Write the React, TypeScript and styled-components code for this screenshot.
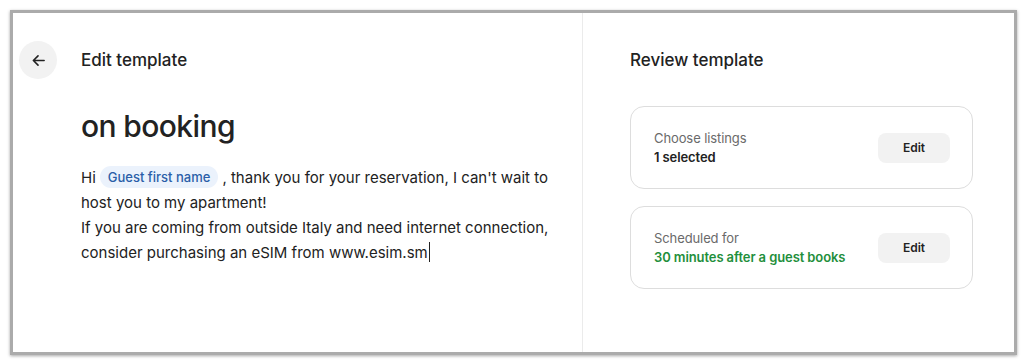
import React from "react";
import styled, { createGlobalStyle } from "styled-components";

const GlobalStyle = createGlobalStyle`
  html, body {
    margin: 0;
    padding: 0;
    background: #ffffff;
  }
  body {
    font-family: Inter, "Noto Sans", "Liberation Sans", sans-serif;
    color: #222222;
    -webkit-font-smoothing: antialiased;
  }
`;

const Page = styled.div`
  padding: 10px 7px 10px 10px;
`;

const Panel = styled.div`
  box-sizing: border-box;
  width: 1007px;
  height: 345px;
  border: 3px solid #ababab;
  box-shadow: 0 1px 3px rgba(0, 0, 0, 0.35);
  background: #ffffff;
  display: flex;
`;

const EditorColumn = styled.section`
  width: 570px;
  border-right: 1px solid #ebebeb;
  padding: 28px 0 0 6px;
  box-sizing: border-box;
`;

const ReviewColumn = styled.section`
  flex: 1;
  padding: 28px 41px 0 47px;
  box-sizing: border-box;
`;

const HeaderRow = styled.div`
  display: flex;
  align-items: center;
  gap: 24px;
  height: 38px;
`;

const BackButton = styled.button`
  width: 38px;
  height: 38px;
  border-radius: 50%;
  border: none;
  background: #f2f2f2;
  display: flex;
  align-items: center;
  justify-content: center;
  padding: 0;
  color: #222222;
  cursor: pointer;
`;

const Title = styled.h2`
  margin: 0;
  font-size: 17px;
  font-weight: 500;
  letter-spacing: 0;
  color: #222222;
`;

const Body = styled.div`
  padding-left: 62px;
`;

const Heading = styled.h1`
  margin: 29px 0 0;
  font-size: 30px;
  line-height: 36px;
  font-weight: 500;
  letter-spacing: -0.6px;
  color: #222222;
`;

const Message = styled.p`
  margin: 21px 0 0;
  width: 476px;
  font-size: 15px;
  line-height: 25px;
  font-weight: 400;
  letter-spacing: 0;
  color: #222222;
`;

const Chip = styled.span`
  display: inline-block;
  background: #ebf2fc;
  color: #2a5ea8;
  font-size: 13px;
  font-weight: 500;
  line-height: 20px;
  padding: 1px 8px;
  border-radius: 11px;
  margin: 0 4px 0 4px;
  letter-spacing: 0;
  vertical-align: 1px;
`;

const Caret = styled.span`
  display: inline-block;
  width: 1px;
  height: 20px;
  background: #222222;
  vertical-align: -4px;
  margin-left: 1px;
`;

const Cards = styled.div`
  margin-top: 27px;
  display: flex;
  flex-direction: column;
  gap: 17px;
`;

const Card = styled.div`
  height: 83px;
  box-sizing: border-box;
  border: 1px solid #dddddd;
  border-radius: 14px;
  padding: 0 22px 0 23px;
  display: flex;
  align-items: center;
  justify-content: space-between;
`;

const CardText = styled.div`
  display: flex;
  flex-direction: column;
  gap: 1px;
`;

const CardLabel = styled.span`
  font-size: 13px;
  line-height: 18px;
  color: #6a6a6a;
  letter-spacing: -0.1px;
`;

const CardValue = styled.span<{ $accent?: boolean }>`
  font-size: 13px;
  line-height: 18px;
  font-weight: 600;
  letter-spacing: -0.1px;
  color: ${(p) => (p.$accent ? "#1f8f3c" : "#222222")};
`;

const EditButton = styled.button`
  width: 72px;
  height: 30px;
  border: none;
  border-radius: 8px;
  background: #f2f2f2;
  font-family: inherit;
  font-size: 12px;
  font-weight: 600;
  color: #222222;
  cursor: pointer;
`;

const ArrowLeft = () => (
  <svg width="15" height="15" viewBox="0 0 16 16" fill="none">
    <path
      d="M14 8H2.5M7.5 3L2.5 8L7.5 13"
      stroke="currentColor"
      strokeWidth="1.7"
      strokeLinecap="round"
      strokeLinejoin="round"
    />
  </svg>
);

const settings = [
  { label: "Choose listings", value: "1 selected", accent: false },
  { label: "Scheduled for", value: "30 minutes after a guest books", accent: true },
];

export default function App() {
  return (
    <>
      <GlobalStyle />
      <Page>
        <Panel>
          <EditorColumn>
            <HeaderRow>
              <BackButton aria-label="Back">
                <ArrowLeft />
              </BackButton>
              <Title>Edit template</Title>
            </HeaderRow>
            <Body>
              <Heading>on booking</Heading>
              <Message>
                Hi<Chip>Guest first name</Chip>, thank you for your reservation, I can't wait to host
                you to my apartment!
                <br />
                If you are coming from outside Italy and need internet connection, consider
                purchasing an eSIM from www.esim.sm
                <Caret />
              </Message>
            </Body>
          </EditorColumn>
          <ReviewColumn>
            <HeaderRow>
              <Title>Review template</Title>
            </HeaderRow>
            <Cards>
              {settings.map((s) => (
                <Card key={s.label}>
                  <CardText>
                    <CardLabel>{s.label}</CardLabel>
                    <CardValue $accent={s.accent}>{s.value}</CardValue>
                  </CardText>
                  <EditButton>Edit</EditButton>
                </Card>
              ))}
            </Cards>
          </ReviewColumn>
        </Panel>
      </Page>
    </>
  );
}
